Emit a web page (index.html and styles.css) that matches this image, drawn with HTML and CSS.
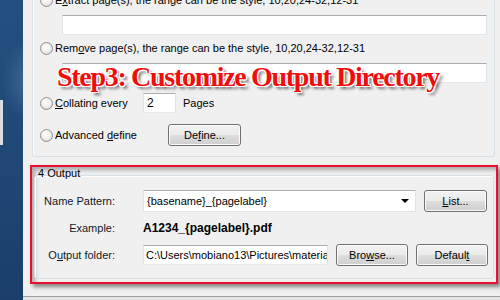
FILE: index.html
```html
<!DOCTYPE html>
<html lang="en">
<head>
    <meta charset="UTF-8">
    <meta name="viewport" content="width=device-width, initial-scale=1.0">
    <title>Split PDF - Output Settings</title>
    <link rel="stylesheet" href="styles.css">
</head>
<body>

<div class="desktop"></div>

<div class="window">

    <!-- 3 Pages group (scrolled, top cut off) -->
    <div class="group pages">
        <div class="opt">
            <span class="radio"></span>
            <span>E<u>x</u>tract page(s), the range can be the style, 10,20,24-32,12-31</span>
        </div>
        <div class="textbox wide"></div>

        <div class="opt row-remove">
            <span class="radio"></span>
            <span>Rem<u>o</u>ve page(s), the range can be the style, 10,20,24-32,12-31</span>
        </div>
        <div class="textbox wide"></div>

        <div class="opt row-collate">
            <span class="radio"></span>
            <span class="opt-label collate"><u>C</u>ollating every</span>
            <span class="textbox small">2</span>
            <span class="pages-label">Pages</span>
        </div>

        <div class="opt row-define">
            <span class="radio"></span>
            <span class="opt-label define">Advanced <u>d</u>efine</span>
            <button class="btn btn-define">De<u>f</u>ine...</button>
        </div>

        <!-- tutorial caption drawn over the dialog -->
        <div class="caption">Step3: Customize Output Directory</div>
    </div>

    <!-- 4 Output group, highlighted -->
    <div class="highlight">
        <div class="group output">
            <div class="legend">4 Output</div>
            <div class="form">
                <label class="lbl">Name Pattern:</label>
                <div class="field">
                    <div class="combo">
                        <span>{basename}_{pagelabel}</span>
                        <span class="arrow"></span>
                    </div>
                    <button class="btn btn-list"><u>L</u>ist...</button>
                </div>

                <label class="lbl">Example:</label>
                <div class="field example">A1234_{pagelabel}.pdf</div>

                <label class="lbl">O<u>u</u>tput folder:</label>
                <div class="field">
                    <div class="textbox folder">C:\Users\mobiano13\Pictures\materials</div>
                    <button class="btn btn-wide">Bro<u>w</u>se...</button>
                    <button class="btn btn-wide">Defaul<u>t</u></button>
                </div>
            </div>
        </div>
    </div>

    <div class="footer"></div>
</div>

</body>
</html>
```

FILE: styles.css
```css
body {
    margin: 0;
    width: 500px;
    height: 300px;
    overflow: hidden;
    display: flex;
    font-family: "Liberation Sans", Arial, sans-serif;
    font-size: 11px;
    color: #000;
}
u {
    text-decoration: underline;
    text-underline-offset: 1px;
}
.desktop {
    width: 23px;
    flex: none;
    background:
        linear-gradient(#d9dde3, #d9dde3) 0 100px / 3px 45px no-repeat,
        radial-gradient(ellipse 40px 60px at 30px 80px, rgba(120, 160, 200, 0.35), transparent 70%),
        linear-gradient(#23507f, #1f4675 60%, #1b3e6a);
}
.window {
    flex: 1;
    background-color: #f0f0f0;
    display: flex;
    flex-direction: column;
}

/* group boxes */
.group {
    border: 1px solid #d5dfe5;
    border-radius: 3px;
    box-shadow: inset 1px 1px 0 #fff;
}
.pages {
    position: relative;
    margin: -11px 5px 0 9px;
    padding: 0 7px 10px 7px;
}
.opt {
    display: flex;
    align-items: center;
    height: 20px;
}
.radio {
    width: 11px;
    height: 11px;
    border: 1px solid #8f8f8f;
    border-radius: 50%;
    margin-right: 2px;
    flex: none;
    background: radial-gradient(circle at 45% 40%, #ffffff 0%, #f0f0f0 45%, #cfcfcf 100%);
}
.textbox {
    box-sizing: border-box;
    height: 20px;
    background-color: #fff;
    border: 1px solid #e2e3ea;
    border-top-color: #abadb3;
    border-bottom-color: #e3e9ef;
    padding: 0 3px;
    line-height: 18px;
    white-space: nowrap;
    overflow: hidden;
}
.wide {
    margin: 5px 0 0 22px;
}
.row-remove {
    margin-top: 3px;
}
.row-collate {
    margin-top: 10px;
}
.opt-label.collate {
    width: 88px;
}
.textbox.small {
    width: 33px;
    font-size: 12px;
}
.pages-label {
    margin-left: 7px;
}
.row-define {
    margin-top: 11px;
    height: 22px;
}
.opt-label.define {
    width: 113px;
}

/* buttons */
.btn {
    box-sizing: border-box;
    height: 22px;
    font-family: inherit;
    font-size: 11px;
    color: #000;
    border: 1px solid #707070;
    border-radius: 3px;
    padding: 0;
    background: linear-gradient(#f2f2f2 0%, #ebebeb 48%, #dddddd 52%, #cfcfcf 100%);
    box-shadow: inset 0 0 0 1px #fbfbfb;
}
.btn-define {
    width: 73px;
}
.btn-list {
    width: 63px;
}
.btn-wide {
    width: 72px;
}

/* tutorial caption */
.caption {
    position: absolute;
    left: 24px;
    top: 71px;
    font-family: "Liberation Serif", "Times New Roman", serif;
    font-weight: bold;
    font-size: 28px;
    letter-spacing: -1.3px;
    color: #f20d0d;
    white-space: nowrap;
    text-shadow:
        -1px -1px 0 #fff, 1px -1px 0 #fff, -1px 1px 0 #fff, 1px 1px 0 #fff,
        0 -1px 0 #fff, 0 1px 0 #fff, -1px 0 0 #fff, 1px 0 0 #fff,
        3px 3px 3px rgba(0, 0, 0, 0.55);
}

/* red highlight frame */
.highlight {
    margin: 8px 2px 0 7px;
    border: 2px solid #e8102e;
    box-shadow: 3px 3px 4px rgba(0, 0, 0, 0.45), inset 3px 3px 4px rgba(0, 0, 0, 0.3);
}
.output {
    margin: 8px 2px 3px 2px;
    padding-bottom: 12px;
}
.legend {
    margin: -10px 0 0 3px;
    height: 14px;
    line-height: 14px;
}
.form {
    margin-top: 10px;
    display: grid;
    grid-template-columns: 80px 1fr;
    column-gap: 28px;
    row-gap: 9px;
    align-items: center;
}
.lbl {
    text-align: right;
    color: #101828;
}
.field {
    display: flex;
    gap: 8px;
    align-items: center;
}
.combo {
    box-sizing: border-box;
    width: 273px;
    height: 22px;
    background-color: #fff;
    border: 1px solid #e2e3ea;
    border-top-color: #abadb3;
    padding: 0 3px;
    display: flex;
    align-items: center;
    justify-content: space-between;
}
.arrow {
    width: 0;
    height: 0;
    margin-right: 3px;
    border-left: 4px solid transparent;
    border-right: 4px solid transparent;
    border-top: 4px solid #000;
}
.example {
    font-weight: bold;
    font-size: 12px;
    height: 14px;
}
.folder {
    width: 185px;
    font-size: 11px;
    padding-left: 2px;
}

.footer {
    margin-top: auto;
    height: 3px;
    border-top: 1px solid #a0a0a0;
    background-color: #e2e2e2;
}
```
